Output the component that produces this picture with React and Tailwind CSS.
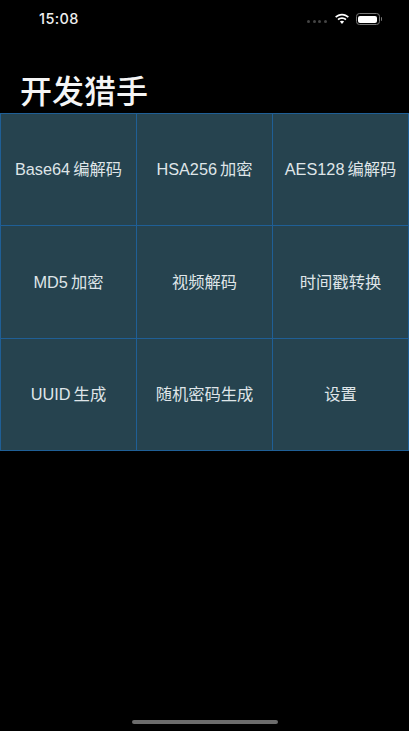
import React from "react";

const items = ["Base64 编解码","HSA256 加密","AES128 编解码","MD5 加密","视频解码","时间戳转换","UUID 生成","随机密码生成","设置"];

export default function App() {
  return (
    <div className="w-[409px] h-[731px] bg-black flex flex-col overflow-hidden relative text-white" style={{fontFamily:'"Inter","Noto Sans CJK SC",sans-serif'}}>
      <div className="h-[38px] flex items-center justify-between pl-[39px] pr-[27px] shrink-0">
        <span className="text-[14.5px] font-medium tracking-[0.4px] text-[#eeeeee]" >15:08</span>
        <div className="flex items-center gap-[6px]">
          <div className="flex gap-[2.5px] mr-[1px] mt-[4px]">
            {[0,1,2,3].map(i => <span key={i} className="w-[3px] h-[3px] rounded-full bg-[#444]" />)}
          </div>
          <svg width="16" height="12" viewBox="0 0 16 12" fill="white">
            <path d="M8 2.4c2.3 0 4.3.9 5.8 2.4l1.1-1.2C13.1 1.8 10.7.7 8 .7S2.9 1.8 1.1 3.6l1.1 1.2C3.7 3.3 5.7 2.4 8 2.4z"/>
            <path d="M8 5.9c1.3 0 2.5.5 3.4 1.4l1.1-1.2C11.3 4.9 9.7 4.2 8 4.2s-3.3.7-4.5 1.9l1.1 1.2C5.5 6.4 6.7 5.9 8 5.9z"/>
            <path d="M8 7.7c-.8 0-1.6.3-2.1.9L8 11l2.1-2.4c-.5-.6-1.3-.9-2.1-.9z"/>
          </svg>
          <div className="flex items-center gap-[1px]">
            <div className="w-[24px] h-[12px] rounded-[3.5px] border border-[#777] p-[1.5px]">
              <div className="w-full h-full bg-white rounded-[2px]" />
            </div>
            <div className="w-[1.5px] h-[4px] bg-[#777] rounded-r-sm" />
          </div>
        </div>
      </div>
      <div className="h-[75px] shrink-0 flex items-end pl-[20px] pb-[2px]">
        <h1 className="text-[32px] leading-[38px] font-medium text-[#f5f5f5]">开发猎手</h1>
      </div>
      <div className="grid grid-cols-3 grid-rows-3 w-[409px] h-[338px] border-t border-l border-[#1f5f96]">
        {items.map(t => (
          <div key={t} className="bg-[#26434f] border-r border-b border-[#1f5f96] flex items-center justify-center text-[16.3px] [word-spacing:-1.5px] text-[#dfe5e8] font-['Liberation_Sans','Noto_Sans_CJK_SC',sans-serif]">{t}</div>
        ))}
      </div>
      <div className="absolute bottom-[7px] left-[132px] w-[146px] h-[4px] rounded-full bg-[#6b6b6b]" />
    </div>
  );
}
